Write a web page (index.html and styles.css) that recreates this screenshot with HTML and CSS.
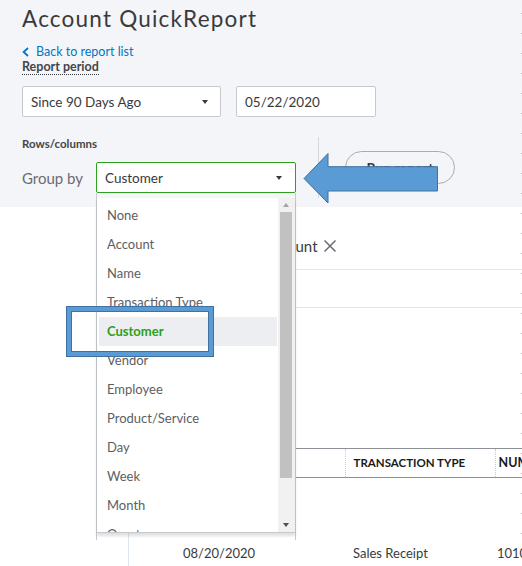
FILE: index.html
```html
<!DOCTYPE html>
<html lang="en">
<head>
<meta charset="utf-8">
<title>Account QuickReport</title>
<link rel="stylesheet" href="styles.css">
</head>
<body>
<div class="page">
  <header class="top">
    <h1 class="title">Account QuickReport</h1>
    <a class="back" href="#"><svg class="chev" width="7" height="10" viewBox="0 0 7 10"><polyline points="6,1 1.6,5 6,9" fill="none" stroke="#0077c5" stroke-width="1.8"/></svg>Back to report list</a>
    <div class="period-label">Report period</div>
    <div class="period-row">
      <div class="select period-select"><span>Since 90 Days Ago</span><span class="caret"></span></div>
      <div class="input date-input">05/22/2020</div>
    </div>
    <div class="rows-row">
      <div class="rows-block">
        <div class="rows-label">Rows/columns</div>
        <div class="groupby-row">
          <span class="groupby-label">Group by</span>
          <div class="groupby-wrap">
            <div class="select groupby-select"><span>Customer</span><span class="caret"></span></div>
            <div class="dropdown">
              <div class="list">
                <ul class="items">
                  <li>None</li>
                  <li>Account</li>
                  <li>Name</li>
                  <li>Transaction Type</li>
                  <li class="selected">Customer</li>
                  <li>Vendor</li>
                  <li>Employee</li>
                  <li>Product/Service</li>
                  <li>Day</li>
                  <li>Week</li>
                  <li>Month</li>
                  <li>Quarter</li>
                </ul>
                <div class="scrollbar">
                  <span class="sb-btn"><span class="sb-up"></span></span>
                  <span class="sb-thumb"></span>
                  <span class="sb-rest"></span>
                  <span class="sb-btn"><span class="sb-down"></span></span>
                </div>
              </div>
            </div>
          </div>
        </div>
      </div>
      <button class="run" type="button">Run report</button>
    </div>
    <svg class="callout-arrow" width="142" height="56" viewBox="0 0 142 56"><polygon points="4,28.5 28,3.5 28,16.7 137.5,16.7 137.5,41 28,41 28,53" fill="#5b9bd5" stroke="#41719c" stroke-width="1"/></svg>
  </header>
  <main class="content">
    <div class="filters">
      <span class="chip">Account<svg class="close" width="14" height="14" viewBox="0 0 14 14"><path d="M1.5 1.5 L12.5 12.5 M12.5 1.5 L1.5 12.5" stroke="#6b6c72" stroke-width="1.5" fill="none"/></svg></span>
    </div>
    <div class="band"></div>
    <table class="report">
      <colgroup><col class="c1"><col class="c2"><col class="c3"></colgroup>
      <thead>
        <tr><th>DATE</th><th>TRANSACTION TYPE</th><th>NUM</th></tr>
      </thead>
      <tbody>
        <tr class="gap"><td></td><td></td><td></td></tr>
        <tr><td class="date">08/20/2020</td><td>Sales Receipt</td><td>1010</td></tr>
      </tbody>
    </table>
  </main>
  <div class="highlight-box"></div>
</div>
</body>
</html>
```

FILE: styles.css
```css
* { box-sizing: border-box; }
html, body { margin: 0; padding: 0; }
body {
  width: 522px;
  height: 566px;
  overflow: hidden;
  font-family: Lato, "Open Sans", sans-serif;
  color: #393a3d;
  background: #fff;
}
.page { position: relative; height: 566px; overflow: hidden; }
.page::after {
  content: "";
  position: absolute;
  top: 0; right: 0;
  width: 1px; height: 100%;
  background: repeating-linear-gradient(to bottom, transparent 0 13px, #b9bcc1 13px 14px, transparent 14px 20px);
  z-index: 20;
}

/* header */
.top {
  position: relative;
  background: #f4f5f8;
  padding: 6px 0 9px 22px;
}
.title {
  margin: 0;
  font-size: 22.5px;
  letter-spacing: 1.2px;
  line-height: 26px;
  font-weight: 400;
  color: #393a3d;
}
.back {
  display: flex;
  align-items: center;
  margin-top: 13px;
  font-size: 12.5px;
  line-height: 14px;
  color: #0077c5;
  text-decoration: none;
}
.chev { margin-right: 7px; }
.period-label {
  width: fit-content;
  margin-top: 1px;
  font-size: 12.5px;
  line-height: 14px;
  font-weight: 700;
  color: #44464a;
  border-bottom: 1px dotted #393a3d;
}
.period-row { display: flex; margin-top: 11px; }
.select, .input {
  height: 31px;
  border: 1px solid #c6c9ce;
  background: #fff;
  display: flex;
  align-items: center;
  font-size: 13.5px;
  color: #393a3d;
  border-radius: 2px;
}
.select { justify-content: space-between; padding: 0 12px 0 8px; }
.period-select { width: 199px; }
.date-input { width: 140px; margin-left: 15px; padding: 0 8px; }
.caret {
  width: 0; height: 0;
  border-left: 3.5px solid transparent;
  border-right: 3.5px solid transparent;
  border-top: 4px solid #393a3d;
}

.rows-row { display: flex; align-items: center; margin-top: 20px; }
.rows-block {
  padding: 0 22px 5px 0;
  border-right: 1px solid #d4d7dc;
}
.rows-label {
  font-size: 11.5px;
  line-height: 13px;
  font-weight: 700;
  color: #44464a;
}
.groupby-row { display: flex; align-items: center; margin-top: 12px; }
.groupby-label { width: 74px; font-size: 15px; color: #6b6c72; }
.groupby-wrap { position: relative; width: 200px; z-index: 5; }
.groupby-select { width: 200px; border-color: #2ca01c; padding-right: 13px; }

.run {
  margin-left: 26px;
  width: 110px;
  height: 33px;
  border: 1px solid #a9acb1;
  border-radius: 17px;
  background: transparent;
  font-family: Lato, "Open Sans", sans-serif;
  font-size: 14px;
  font-weight: 700;
  color: #393a3d;
  padding: 0;
}

.callout-arrow {
  position: absolute;
  left: 300px;
  top: 150px;
  z-index: 6;
}

/* dropdown */
.dropdown {
  position: absolute;
  top: 31px;
  left: 0;
  width: 200px;
  height: 347px;
  padding-top: 5px;
  border-left: 1px solid #c6c9ce;
  border-right: 1px solid #c6c9ce;
}
.list {
  display: flex;
  height: 335px;
  background: #fff;
  border-bottom: 1px solid #c6c9ce;
  box-shadow: 0 3px 3px rgba(0, 0, 0, 0.13);
}
.items {
  flex: 1;
  list-style: none;
  margin: 0;
  padding: 3px 1px 0 2px;
  overflow: hidden;
}
.items li {
  height: 29px;
  line-height: 29px;
  padding-left: 8px;
  font-size: 13px;
  color: #5d5e63;
  white-space: nowrap;
}
.items li.selected {
  background: #eceef1;
  color: #2ca01c;
  font-weight: 700;
}
.scrollbar {
  width: 17px;
  display: flex;
  flex-direction: column;
  background: #f1f1f1;
  padding: 0 3px 0 2px;
}
.sb-btn { height: 14px; display: flex; align-items: center; justify-content: center; }
.sb-thumb { height: 266px; background: #c1c1c1; }
.sb-rest { flex: 1; }
.sb-up, .sb-down { width: 0; height: 0; border-left: 3.5px solid transparent; border-right: 3.5px solid transparent; }
.sb-up { border-bottom: 4px solid #a3a3a3; }
.sb-down { border-top: 4px solid #505050; }

.highlight-box {
  position: absolute;
  left: 67px;
  top: 307px;
  width: 146px;
  height: 49px;
  border: 4px solid #5b9bd5;
  box-shadow: 0 0 0 1px #41719c, inset 0 0 0 1px #41719c;
  z-index: 10;
}

/* content */
.content {
  margin-left: 128px;
  border-left: 1px solid #dfe5ee;
  height: 359px;
}
.filters {
  height: 63px;
  border-bottom: 1px solid #e3e5e8;
  padding: 30px 0 0 134px;
}
.chip {
  display: flex;
  align-items: center;
  font-size: 15px;
  line-height: 18px;
  color: #393a3d;
}
.close { margin-left: 5px; }
.band {
  height: 38px;
  border-bottom: 1px solid #e3e5e8;
}
.report {
  width: 100%;
  margin-top: 140px;
  border-collapse: collapse;
  table-layout: fixed;
}
.report col.c1 { width: 216px; }
.report col.c2 { width: 150px; }
.report th {
  height: 29px;
  border-top: 1px solid #8d9096;
  border-bottom: 1px solid #8d9096;
  font-size: 11.5px;
  font-weight: 700;
  color: #1a1a1a;
  text-align: left;
  padding: 0 0 2px 8px;
  white-space: nowrap;
  overflow: visible;
}
.report th + th { border-left: 1px dotted #c6c9ce; }
.report th:last-child { padding-left: 3px; font-size: 12.5px; }
.report td {
  font-size: 13px;
  color: #393a3d;
  padding: 0 0 0 8px;
  white-space: nowrap;
  height: 29px;
}
.report td:last-child { padding-left: 2px; }
.report tr.gap td { height: 61px; }
.report td.date { padding-left: 54px; }
```
